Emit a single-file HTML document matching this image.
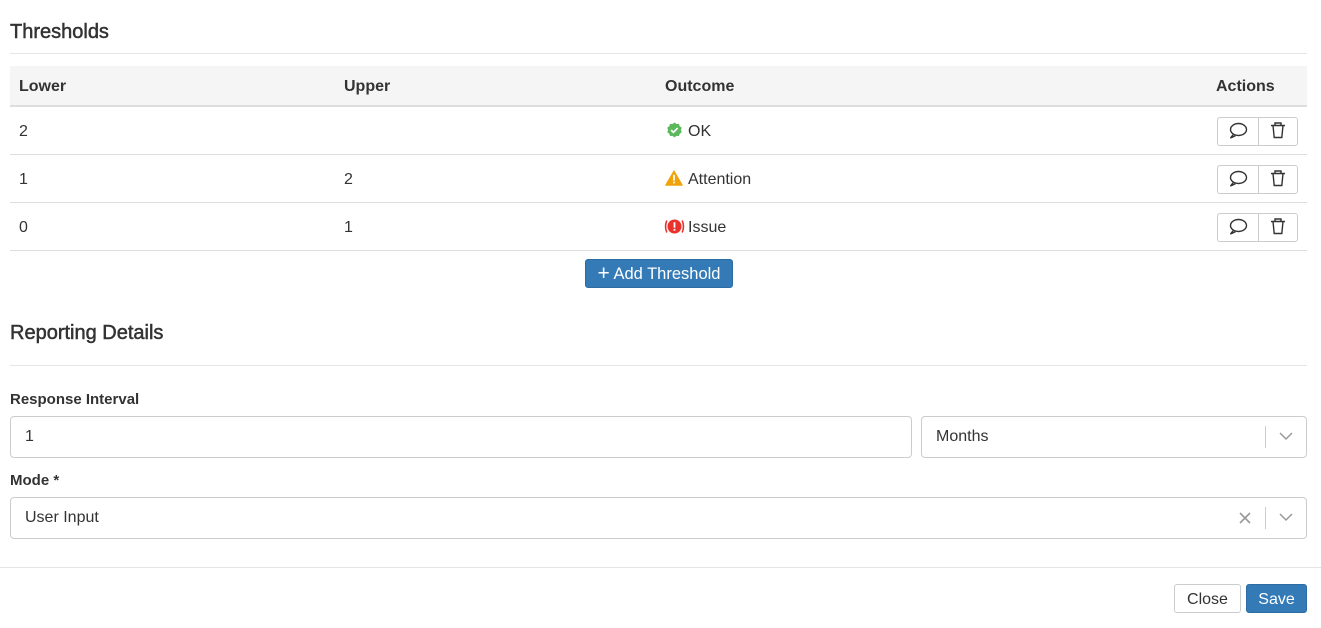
<!DOCTYPE html>
<html><head><style>
*{box-sizing:border-box;margin:0;padding:0}
body{width:1321px;height:628px;background:#fff;font-family:"Liberation Sans",Helvetica,Arial,sans-serif;color:#333;position:relative;overflow:hidden}
.a{position:absolute}
h2{font-size:20px;font-weight:normal;color:#333;-webkit-text-stroke:0.5px #333}
.hr{position:absolute;left:10px;width:1297px;height:1px;background:#e5e5e5}
.t{font-size:16px}
.b{font-weight:bold}
.row{position:absolute;left:10px;width:1297px;height:1px;background:#ddd}
.btns{position:absolute;left:1217px;width:81px;height:29px;border:1px solid #ccc;border-radius:3px;background:#fff}
.btns:after{content:"";position:absolute;left:40px;top:0;width:1px;height:27px;background:#ccc}
.inp{position:absolute;border:1px solid #ccc;border-radius:4px;height:42px;font-size:16px;padding:11px 14px;color:#333}
label{position:absolute;font-weight:bold;font-size:15px;left:10px}
.btn{position:absolute;border-radius:3px;font-size:16px;text-align:center;line-height:28px;height:29px}
</style></head><body>
<h2 class="a" style="left:10px;top:21px">Thresholds</h2>
<div class="hr" style="top:53px"></div>
<div class="a" style="left:10px;top:66px;width:1297px;height:41px;background:#f5f5f5;border-bottom:2px solid #ddd"></div>
<div class="a t b" style="left:19px;top:78px">Lower</div>
<div class="a t b" style="left:344px;top:78px">Upper</div>
<div class="a t b" style="left:665px;top:78px">Outcome</div>
<div class="a t b" style="left:1216px;top:78px">Actions</div>

<div class="a t" style="left:19px;top:123px">2</div>
<svg class="a" style="left:666px;top:122px" width="17" height="17" viewBox="0 0 16 16"><path d="M8 0.5l1.9 1.4 2.3-.1.7 2.2 1.9 1.3-.7 2.2.7 2.2-1.9 1.3-.7 2.2-2.3-.1L8 14.5 6.1 13.1l-2.3.1-.7-2.2L1.2 9.7l.7-2.2-.7-2.2 1.9-1.3.7-2.2 2.3.1z" fill="#5cb85c"/><path d="M4.8 7.6l2.2 2.1 4-4" stroke="#fff" stroke-width="1.6" fill="none"/></svg>
<div class="a t" style="left:688px;top:123px">OK</div>
<div class="btns" style="top:117px"></div>
<div class="row" style="top:154px"></div>

<div class="a t" style="left:19px;top:171px">1</div>
<div class="a t" style="left:344px;top:171px">2</div>
<svg class="a" style="left:665px;top:170px" width="18" height="16" viewBox="0 0 17 15"><path d="M8.5 0.8L16.3 14.3H0.7z" fill="#f0a30a" stroke="#f0a30a" stroke-linejoin="round"/><rect x="7.7" y="4.5" width="1.6" height="5.5" fill="#fff"/><rect x="7.7" y="11" width="1.6" height="1.6" fill="#fff"/></svg>
<div class="a t" style="left:688px;top:171px">Attention</div>
<div class="btns" style="top:165px"></div>
<div class="row" style="top:202px"></div>

<div class="a t" style="left:19px;top:219px">0</div>
<div class="a t" style="left:344px;top:219px">1</div>
<svg class="a" style="left:664px;top:218px" width="21" height="17" viewBox="0 0 21 16"><path d="M2.8 2Q0.3 8 2.8 14M18.2 2Q20.7 8 18.2 14" stroke="#e8322b" stroke-width="1.6" fill="none"/><circle cx="10.5" cy="8" r="7" fill="#e8322b"/><rect x="9.6" y="3.8" width="1.8" height="5.4" fill="#fff"/><rect x="9.6" y="10.4" width="1.8" height="1.8" fill="#fff"/></svg>
<div class="a t" style="left:688px;top:219px">Issue</div>
<div class="btns" style="top:213px"></div>
<div class="row" style="top:250px"></div>

<svg class="a" style="left:1228px;top:122px" width="20" height="120" viewBox="0 0 20 120">
<g fill="none" stroke="#333" stroke-width="1.4">
<g id="c"><ellipse cx="10.5" cy="7.5" rx="8" ry="6"/><path d="M5.5 12.3L2.5 16l5-2.3"/></g>
<use href="#c" y="48"/><use href="#c" y="96"/></g></svg>
<svg class="a" style="left:1270px;top:122px" width="16" height="120" viewBox="0 0 16 120">
<g fill="none" stroke="#333" stroke-width="1.4">
<g id="d"><path d="M1 3.5h14M5 3.5V1h6v2.5M3 3.5l1.2 12h7.6l1.2-12"/></g>
<use href="#d" y="48"/><use href="#d" y="96"/></g></svg>

<div class="btn" style="left:585px;top:259px;width:148px;background:#337ab7;border:1px solid #2e6da4;color:#fff;font-size:16.5px"><span style="font-size:21px;vertical-align:-1px">+</span> Add Threshold</div>

<h2 class="a" style="left:10px;top:322px">Reporting Details</h2>
<div class="hr" style="top:365px"></div>
<label style="top:391px">Response Interval</label>
<div class="inp" style="left:10px;top:416px;width:902px">1</div>
<div class="inp" style="left:921px;top:416px;width:386px">Months</div>
<div class="a" style="left:1265px;top:426px;width:1px;height:22px;background:#ccc"></div>
<svg class="a" style="left:1279px;top:431px" width="14" height="10"><path d="M1 2l6 6 6-6" stroke="#999" stroke-width="1.5" fill="none"/></svg>
<label style="top:472px">Mode *</label>
<div class="inp" style="left:10px;top:497px;width:1297px">User Input</div>
<svg class="a" style="left:1239px;top:512px" width="12" height="12"><path d="M1 1l10 10M11 1L1 11" stroke="#999" stroke-width="1.6"/></svg>
<div class="a" style="left:1265px;top:507px;width:1px;height:22px;background:#ccc"></div>
<svg class="a" style="left:1279px;top:512px" width="14" height="10"><path d="M1 2l6 6 6-6" stroke="#999" stroke-width="1.5" fill="none"/></svg>

<div class="a" style="left:0;top:567px;width:1321px;height:1px;background:#e5e5e5"></div>
<div class="btn" style="left:1174px;top:584px;width:67px;border:1px solid #ccc;background:#fff;color:#333;line-height:29px">Close</div>
<div class="btn" style="left:1246px;top:584px;width:61px;background:#337ab7;border:1px solid #2e6da4;color:#fff;line-height:29px">Save</div>
</body></html>
